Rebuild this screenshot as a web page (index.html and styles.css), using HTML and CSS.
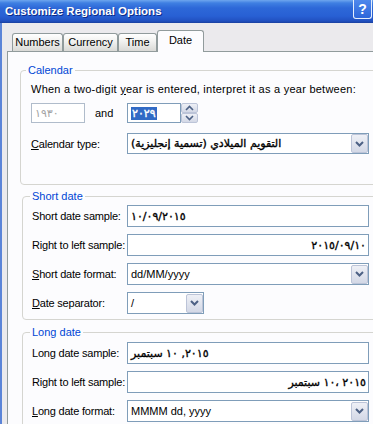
FILE: index.html
```html
<!DOCTYPE html>
<html lang="en">
<head>
    <meta charset="UTF-8">
    <title>Customize Regional Options</title>
    <link rel="stylesheet" href="styles.css">
</head>
<body>
    <div class="window">
        <div class="titlebar">
            <span class="title">Customize Regional Options</span>
            <span class="help">?</span>
        </div>
        <div class="client">
            <div class="tabs">
                <div class="tab tab-numbers">Numbers</div>
                <div class="tab tab-currency">Currency</div>
                <div class="tab tab-time">Time</div>
                <div class="tab tab-date active">Date</div>
            </div>
            <div class="page">
                <!-- Calendar -->
                <fieldset class="group group-calendar">
                    <legend>Calendar</legend>
                    <p class="hint">When a two-digit <u>y</u>ear is entered, interpret it as a year between:</p>
                    <div class="row year-row">
                        <div class="field year disabled"><span class="ar">١٩٣٠</span></div>
                        <span class="and">and</span>
                        <div class="field year"><span class="ar sel">٢٠٢٩</span></div>
                        <div class="spin">
                            <span class="spin-btn"><svg width="9" height="6" viewBox="0 0 9 6"><path d="M1 5 L4.5 1.5 L8 5" fill="none" stroke="#4d6185" stroke-width="1.6"/></svg></span>
                            <span class="spin-btn"><svg width="9" height="6" viewBox="0 0 9 6"><path d="M1 1 L4.5 4.5 L8 1" fill="none" stroke="#4d6185" stroke-width="1.6"/></svg></span>
                        </div>
                    </div>
                    <div class="row cal-row">
                        <label class="label label-wide"><u>C</u>alendar type:</label>
                        <div class="field combo wide"><span class="val ar">التقويم الميلادي (تسمية إنجليزية)</span><span class="drop"><svg width="9" height="6" viewBox="0 0 9 6"><path d="M1 1 L4.5 4.5 L8 1" fill="none" stroke="#4d6185" stroke-width="2"/></svg></span></div>
                    </div>
                </fieldset>

                <!-- Short date -->
                <fieldset class="group group-short">
                    <legend>Short date</legend>
                    <div class="row">
                        <label class="label">Short date sample:</label>
                        <div class="field wide"><bdi class="ar" dir="ltr">١٠/٠٩/٢٠١٥</bdi></div>
                    </div>
                    <div class="row">
                        <label class="label">Right to left sample:</label>
                        <div class="field wide rtl"><bdi class="ar" dir="ltr">٢٠١٥/٠٩/١٠</bdi></div>
                    </div>
                    <div class="row">
                        <label class="label"><u>S</u>hort date format:</label>
                        <div class="field combo wide"><span class="val">dd/MM/yyyy</span><span class="drop"><svg width="9" height="6" viewBox="0 0 9 6"><path d="M1 1 L4.5 4.5 L8 1" fill="none" stroke="#4d6185" stroke-width="2"/></svg></span></div>
                    </div>
                    <div class="row">
                        <label class="label"><u>D</u>ate separator:</label>
                        <div class="field combo narrow"><span class="val">/</span><span class="drop"><svg width="9" height="6" viewBox="0 0 9 6"><path d="M1 1 L4.5 4.5 L8 1" fill="none" stroke="#4d6185" stroke-width="2"/></svg></span></div>
                    </div>
                </fieldset>

                <!-- Long date -->
                <fieldset class="group group-long">
                    <legend>Long date</legend>
                    <div class="row">
                        <label class="label">Long date sample:</label>
                        <div class="field wide"><span class="ar"><bdi>سبتمبر</bdi> <bdi>١٠</bdi> ,<bdi>٢٠١٥</bdi></span></div>
                    </div>
                    <div class="row">
                        <label class="label">Right to left sample:</label>
                        <div class="field wide rtl"><span class="ar"><bdi>سبتمبر</bdi> <bdi>١٠</bdi>، <bdi>٢٠١٥</bdi></span></div>
                    </div>
                    <div class="row">
                        <label class="label"><u>L</u>ong date format:</label>
                        <div class="field combo wide"><span class="val">MMMM dd, yyyy</span><span class="drop"><svg width="9" height="6" viewBox="0 0 9 6"><path d="M1 1 L4.5 4.5 L8 1" fill="none" stroke="#4d6185" stroke-width="2"/></svg></span></div>
                    </div>
                </fieldset>
            </div>
        </div>
    </div>
</body>
</html>
```

FILE: styles.css
```css
/* Window frame */
body {
    margin: 0;
    background: #ebeaed;
    font-family: "Liberation Sans", "DejaVu Sans", sans-serif;
    font-size: 11px;
    color: #000;
    overflow: hidden;
}

.window {
    width: 400px;
    height: 424px;
}

.titlebar {
    height: 23px;
    box-sizing: border-box;
    display: flex;
    justify-content: space-between;
    align-items: flex-start;
    padding: 0 28px 0 5px;
    background: linear-gradient(#6ea6ee 0, #3f7fe2 3px, #2d68d8 8px, #2860d4 16px, #2150c0 21px, #1a3f9e 23px);
}

.title {
    line-height: 22px;
    font-size: 11.5px;
    font-weight: bold;
    color: #fff;
    text-shadow: 1px 1px 0 #0c2a88;
}

.help {
    width: 19px;
    height: 19px;
    box-sizing: border-box;
    border: 1px solid #e6eefc;
    border-top: none;
    border-radius: 0 0 3px 3px;
    background: linear-gradient(#4f88ec, #2d66da);
    color: #fff;
    font-size: 14px;
    font-weight: bold;
    text-align: center;
    line-height: 18px;
}

.client {
    border-left: 2px solid #5b84d8;
    padding: 7px 0 0 5px;
    height: 394px;
}

/* Tabs */
.tabs {
    display: flex;
    align-items: flex-end;
    height: 21px;
    padding-left: 5px;
    position: relative;
    z-index: 1;
}

.tab {
    height: 18px;
    box-sizing: border-box;
    border: 1px solid #919b9c;
    border-bottom: none;
    border-radius: 3px 3px 0 0;
    background: linear-gradient(#ffffff, #f1f1ef 45%, #d9d9d6);
    text-align: center;
    line-height: 13px;
    padding-top: 2px;
}

.tab-numbers { width: 51px; }
.tab-currency { width: 55px; }
.tab-time { width: 39px; }
.tab-date { width: 47px; }

.tab.active {
    height: 22px;
    margin-bottom: -1px;
    background: #fcfcfe;
    padding-top: 3px;
}

.page {
    border: 1px solid #919b9c;
    background: #fcfcfe;
    height: 380px;
}

/* Group boxes */
.group {
    margin: 0;
    border: 1px solid #d5d5d0;
    border-radius: 4px;
    min-width: 0;
}

.group legend {
    color: #0046d5;
    line-height: 13px;
    padding: 0 2px;
}

.group-calendar {
    margin: 12px 0 0 12px;
    padding: 6px 0 30px 10px;
}

.group-calendar legend { margin-left: -5px; }

.group-short {
    margin: 5px 0 0 14px;
    padding: 2px 0 5px 9px;
}

.group-long {
    margin: 6px 0 0 14px;
    padding: 3px 0 5px 9px;
}

.group-short legend,
.group-long legend { margin-left: -2px; }

.hint {
    margin: 0;
    line-height: 13px;
    letter-spacing: 0.25px;
}

.row {
    display: flex;
    align-items: center;
    height: 22px;
    margin-top: 7px;
}

.group-short .row:first-of-type,
.group-long .row:first-of-type { margin-top: 0; }

.year-row { height: 20px; }
.cal-row { height: 21px; margin-top: 10px; }

.label {
    width: 95px;
    flex: none;
    white-space: nowrap;
    letter-spacing: -0.2px;
}

.label-wide { width: 96px; }

/* Inputs */
.field {
    box-sizing: border-box;
    height: 100%;
    border: 1px solid #7f9db9;
    background: #fff;
    padding: 0 3px;
    display: flex;
    align-items: center;
    white-space: nowrap;
    overflow: hidden;
}

.field.wide { width: 242px; }
.field.narrow { width: 77px; }
.field.rtl { justify-content: flex-end; padding-right: 2px; }

.field.year { width: 54px; }

.field.disabled {
    border-color: #b0bccb;
    color: #a3a3a3;
}

/* Arabic text: regular metrics, thickened strokes */
.ar {
    font-family: "DejaVu Sans", sans-serif;
    font-size: 11px;
    -webkit-text-stroke: 0.35px currentColor;
}

.disabled .ar { -webkit-text-stroke: 0; }

.sel {
    background: #316ac5;
    color: #fff;
    padding: 0 1px;
}

.and {
    width: 32px;
    margin-left: 10px;
}

.spin {
    width: 17px;
    height: 20px;
    display: flex;
    flex-direction: column;
}

.spin-btn,
.drop {
    box-sizing: border-box;
    border: 1px solid #bcc4d8;
    border-radius: 2px;
    background: linear-gradient(#eef0f6, #d3d8e6);
    display: flex;
    align-items: center;
    justify-content: center;
}

.spin-btn { height: 10px; }

.combo { padding-right: 0; }

.combo .val { flex: 1; }

.drop {
    width: 17px;
    height: 19px;
    flex: none;
}
```
